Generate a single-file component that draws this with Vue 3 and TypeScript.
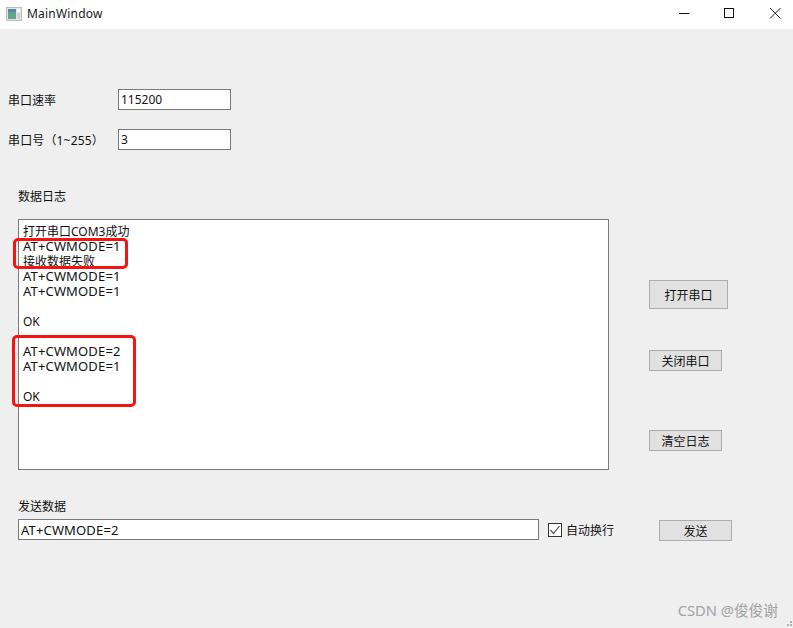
<script setup lang="ts">
const logLines: string[] = [
  '打开串口COM3成功',
  'AT+CWMODE=1',
  '接收数据失败',
  'AT+CWMODE=1',
  'AT+CWMODE=1',
  '',
  'OK',
  '',
  'AT+CWMODE=2',
  'AT+CWMODE=1',
  '',
  'OK',
]
</script>

<template>
  <div class="window">
    <header class="titlebar">
      <svg class="app-icon" width="16" height="14" viewBox="0 0 16 14">
        <rect x="0.5" y="0.5" width="15" height="13" fill="#e6e6e6" stroke="#bdbdbd" />
        <rect x="2" y="2" width="8" height="10" fill="#5fa58f" />
        <rect x="2" y="2" width="8" height="3" fill="#5b84a8" />
        <rect x="11" y="2" width="3" height="3" fill="#fafafa" />
        <rect x="11" y="6" width="3" height="6" fill="#cfcfcf" />
      </svg>
      <span class="title">MainWindow</span>
      <div class="controls">
        <svg width="46" height="29" viewBox="0 0 46 29"><path d="M24 13.5H34.500" stroke="#111" fill="none" /></svg>
        <svg width="46" height="29" viewBox="0 0 46 29"><rect x="23.500" y="8.500" width="9" height="9" stroke="#111" fill="none" /></svg>
        <svg width="46" height="29" viewBox="0 0 46 29"><path d="M23 8L33.500 18.500M33.500 8L23 18.500" stroke="#222" fill="none" /></svg>
      </div>
    </header>

    <main class="client">
      <div class="field first">
        <label class="field-label">串口速率</label>
        <input class="line-edit short" value="115200" />
      </div>
      <div class="field second">
        <label class="field-label wide-latin">串口号（1~255）</label>
        <input class="line-edit short" value="3" />
      </div>

      <div class="section-label log-label">数据日志</div>
      <div class="log-row">
        <div class="log">
          <div
            v-for="(line, i) in logLines"
            :key="i"
            class="log-line"
            :class="{ command: line.startsWith('AT') }"
          >{{ line }}</div>
          <div class="mark mark-a"></div>
          <div class="mark mark-b"></div>
        </div>
        <div class="actions">
          <button class="btn open">打开串口</button>
          <button class="btn close">关闭串口</button>
          <button class="btn clear">清空日志</button>
        </div>
      </div>

      <div class="section-label send-label">发送数据</div>
      <div class="send-row">
        <input class="line-edit send-input" value="AT+CWMODE=2" />
        <label class="check">
          <svg width="14" height="14" viewBox="0 0 14 14">
            <rect x="0.500" y="0.500" width="13" height="13" fill="#fff" stroke="#333" />
            <path d="M2.500 7L5.500 10.500L11.500 3" fill="none" stroke="#555" stroke-width="1.200" />
          </svg>
          <span>自动换行</span>
        </label>
        <button class="btn send">发送</button>
      </div>

      <div class="watermark">CSDN @俊俊谢</div>
      <svg class="grip" width="8" height="8" viewBox="0 0 8 8">
        <g fill="#b0b0b0">
          <rect x="5" y="1" width="2" height="2" />
          <rect x="2" y="4" width="2" height="2" />
          <rect x="5" y="4" width="2" height="2" />
        </g>
      </svg>
    </main>
  </div>
</template>

<style scoped>
.window {
  width: 793px;
  height: 628px;
  display: flex;
  flex-direction: column;
  overflow: hidden;
  background: #efefef;
  color: #111;
  font-family: "Noto Sans", "Noto Sans CJK SC", sans-serif;
  font-size: 12px;
}
.titlebar {
  height: 29px;
  flex: none;
  display: flex;
  align-items: center;
  background: #fff;
  padding-left: 6px;
}
.app-icon {
  margin-right: 5px;
  margin-bottom: 2px;
}
.title {
  font-size: 12px;
  letter-spacing: 0.2px;
  color: #1a1a1a;
  margin-bottom: 2px;
}
.controls {
  margin-left: auto;
  display: flex;
}
.client {
  position: relative;
  flex: 1;
  padding-top: 60px;
}
.field {
  display: flex;
  align-items: center;
  height: 21px;
  padding-left: 8px;
}
.second {
  margin-top: 19px;
}
.field-label {
  width: 110px;
  white-space: nowrap;
}
.wide-latin {
  letter-spacing: 0.15px;
}
.line-edit {
  box-sizing: border-box;
  height: 21px;
  border: 1px solid #7a7a7a;
  background: #fff;
  padding: 0 2px;
  margin: 0;
  outline: none;
  font: inherit;
  color: #111;
}
.short {
  width: 113px;
}
.section-label {
  margin-left: 18px;
  line-height: 16px;
}
.log-label {
  margin-top: 39px;
}
.log-row {
  display: flex;
  margin: 14px 0 0 18px;
}
.log {
  position: relative;
  box-sizing: border-box;
  width: 591px;
  height: 251px;
  border: 1px solid #7a7a7a;
  background: #fff;
  padding: 4px 4px 0;
}
.log-line {
  height: 15px;
  line-height: 15px;
  white-space: nowrap;
}
.command {
  font-size: 13px;
  letter-spacing: 0.15px;
}
.mark {
  position: absolute;
  box-sizing: border-box;
  border: 3px solid #f5140f;
  border-radius: 5px;
}
.mark-a {
  left: -6px;
  top: 18px;
  width: 115px;
  height: 31px;
}
.mark-b {
  left: -7px;
  top: 115px;
  width: 124px;
  height: 72px;
}
.actions {
  display: flex;
  flex-direction: column;
  align-items: flex-start;
  margin-left: 40px;
  padding-top: 61px;
}
.btn {
  box-sizing: border-box;
  height: 21px;
  border: 1px solid #adadad;
  background: #e1e1e1;
  color: #111;
  font: inherit;
  padding: 0;
  margin: 0;
}
.open {
  width: 79px;
  height: 29px;
}
.close {
  width: 73px;
  margin-top: 41px;
}
.clear {
  width: 73px;
  margin-top: 59px;
}
.send-label {
  margin-top: 29px;
}
.send-row {
  display: flex;
  align-items: flex-start;
  margin: 4px 0 0 18px;
}
.send-input {
  width: 521px;
  font-size: 13px;
  letter-spacing: 0.15px;
}
.check {
  display: flex;
  align-items: center;
  gap: 4px;
  height: 21px;
  margin-left: 9px;
  width: 111px;
}
.send {
  width: 73px;
  margin-top: 1px;
}
.watermark {
  position: absolute;
  right: 15px;
  bottom: 8px;
  font-size: 14.7px;
  color: #a3a3a3;
  white-space: nowrap;
}
.grip {
  position: absolute;
  right: 0;
  bottom: 0;
}
</style>

<style>
html, body {
  margin: 0;
  background: #efefef;
}
</style>
